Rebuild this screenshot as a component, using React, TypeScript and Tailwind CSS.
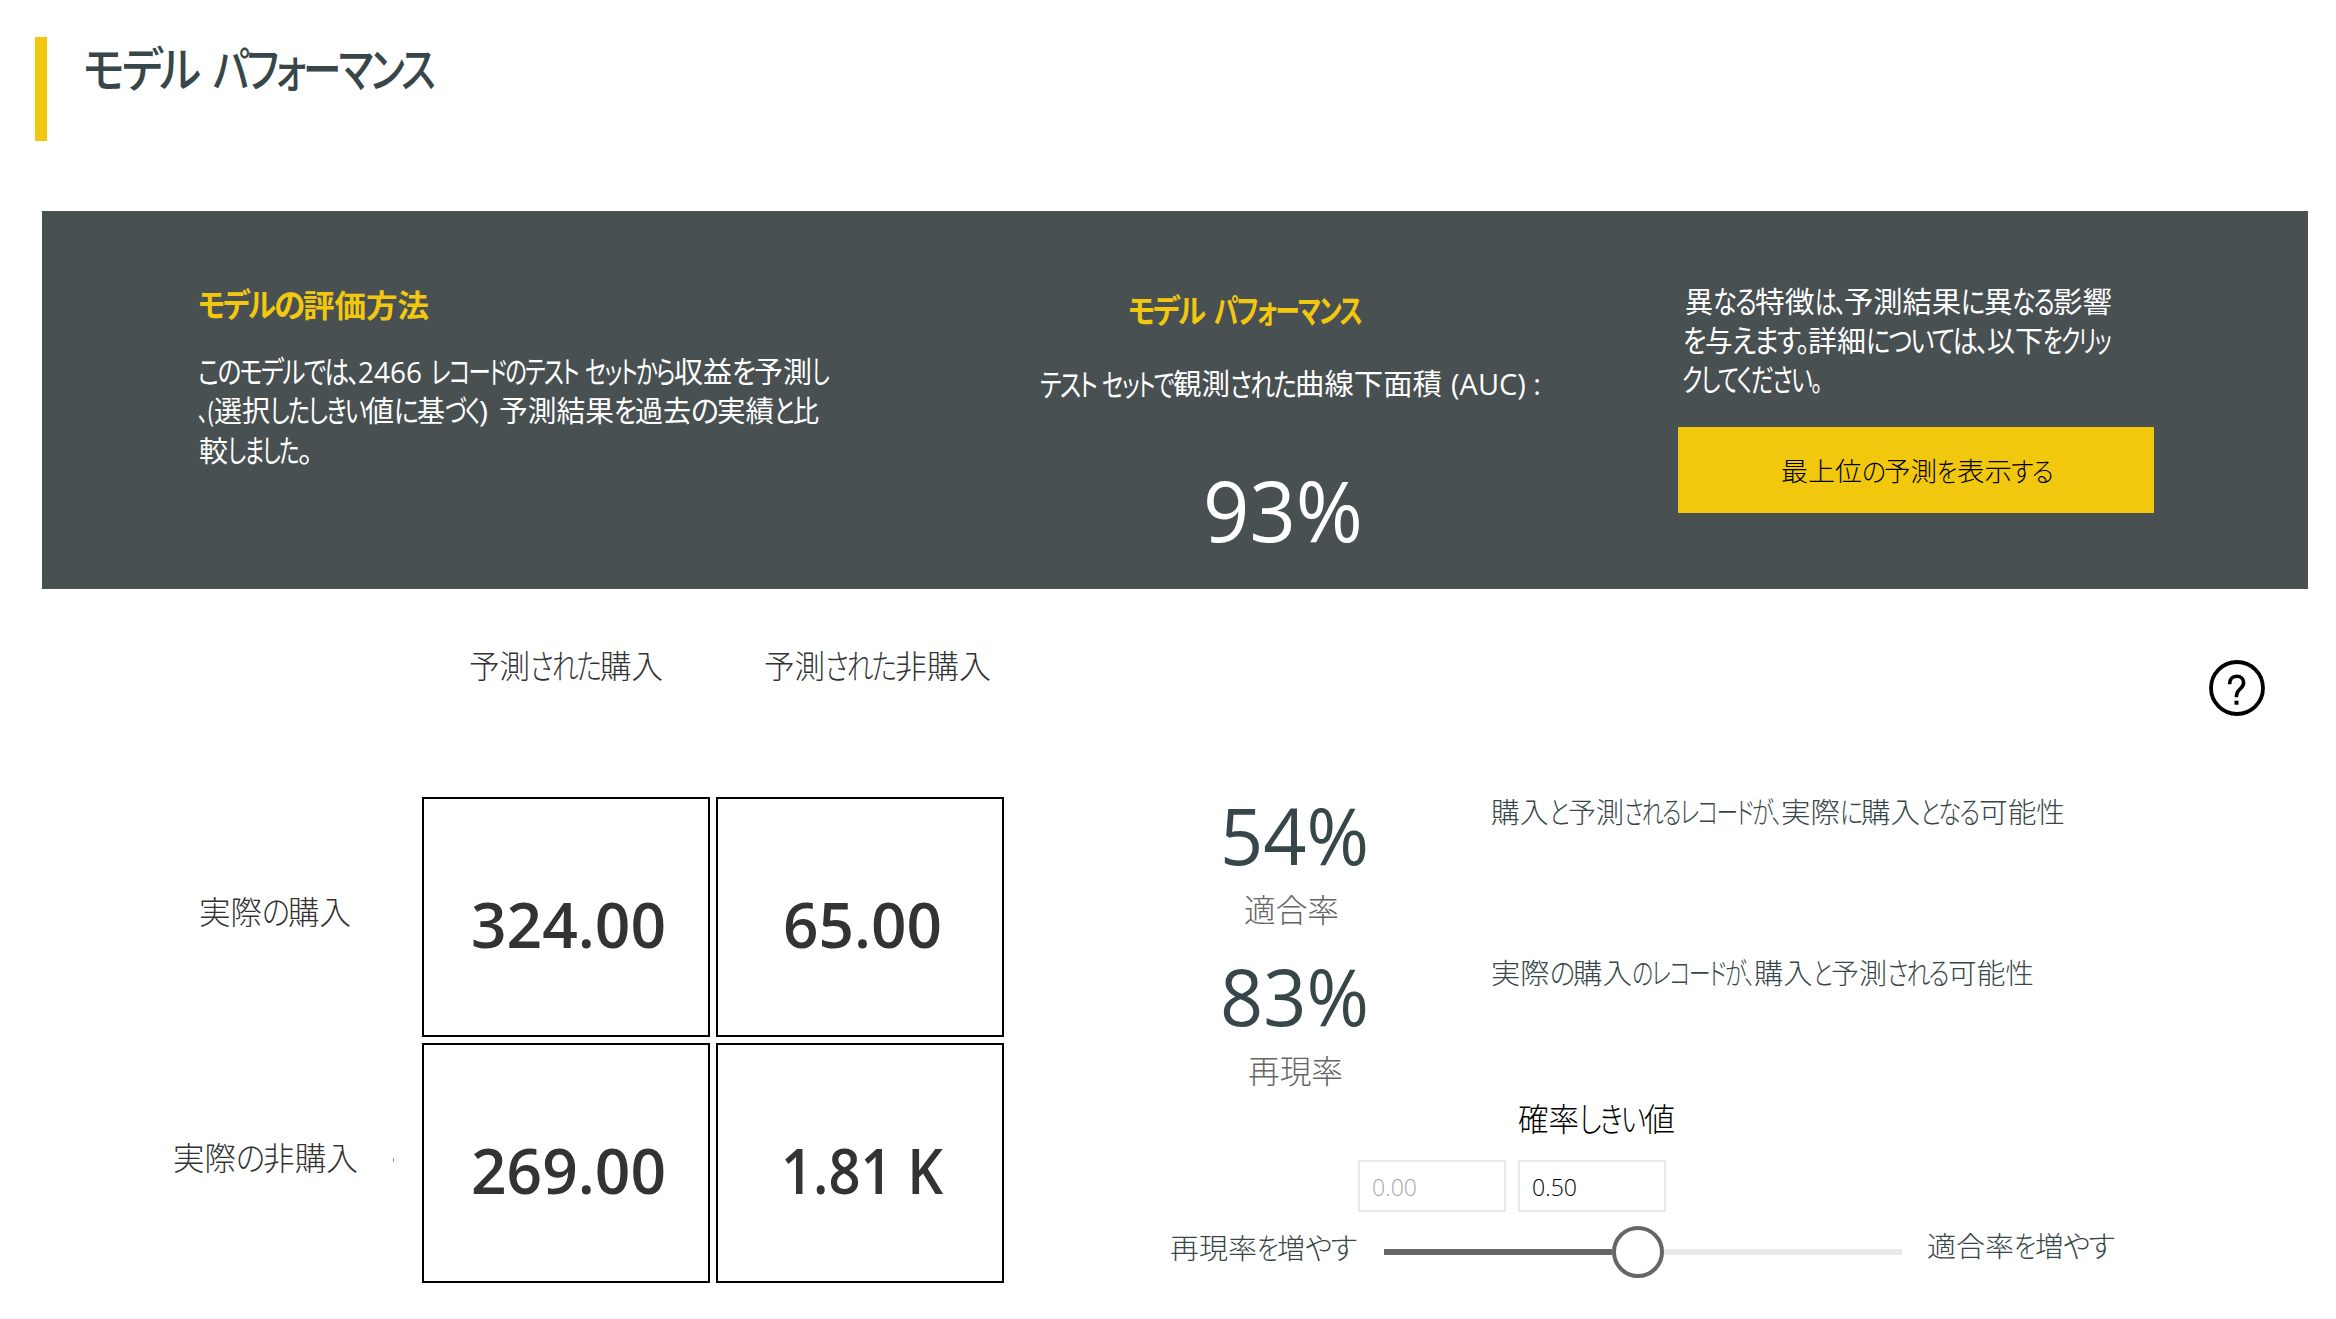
import { useLayoutEffect, useRef, useState } from "react";

type Segment = [text: string, width: number];

const KANA = /^[\u3001-\u30ff]+$/;

/** A run of text condensed or widened to an exact advance width; kana are set tighter than kanji. */
function Run({ text, width }: { text: string; width: number }) {
  const ref = useRef<HTMLSpanElement>(null);
  const [scale, setScale] = useState(1);
  useLayoutEffect(() => {
    if (ref.current && ref.current.offsetWidth > 0) {
      setScale((width / ref.current.getBoundingClientRect().width) * scale);
    }
  }, [text, width]);
  const kana = KANA.test(text) ? "text-[1.05em] tracking-[-0.07em]" : "";
  return (
    <span className="inline-block align-top whitespace-pre" style={{ width }}>
      <span
        ref={ref}
        className={`inline-block origin-left align-top whitespace-pre ${kana}`}
        style={{ transform: `scaleX(${scale})` }}
      >
        {text}
      </span>
    </span>
  );
}

function Line({ parts, className = "" }: { parts: Segment[]; className?: string }) {
  return (
    <div className={`flex whitespace-pre ${className}`}>
      {parts.map(([text, width], i) =>
        text.trim() === "" ? (
          <span key={i} className="whitespace-pre" style={{ width }}>
            {" "}
          </span>
        ) : (
          <Run key={i} text={text} width={width} />
        ),
      )}
    </div>
  );
}

function Cell({ value, width }: { value: string; width: number }) {
  return (
    <div className="flex h-[240px] items-center justify-center border-2 border-black pt-[13px] pl-[4px] text-[63.5px] leading-[80px] font-semibold text-[#333333]">
      <Line parts={[[value, width]]} />
    </div>
  );
}

function Metric({
  value,
  label,
  description,
  labelClass,
}: {
  value: Segment;
  label: Segment;
  description: Segment[];
  labelClass: string;
}) {
  return (
    <div className="flex h-[161px]">
      <div className="w-[271px]">
        <Line className="pt-[2px] text-[79px] leading-[100px] text-[#374649]" parts={[value]} />
        <Line className={`mt-[5px] text-[32px] leading-[40px] font-light text-[#666666] ${labelClass}`} parts={[label]} />
      </div>
      <Line className="pt-[9px] text-[28.5px] leading-[40px] font-light text-[#374649]" parts={description} />
    </div>
  );
}

export default function App() {
  return (
    <main
      lang="ja"
      className="flex h-[1319px] w-[2336px] flex-col overflow-hidden bg-white font-['Open_Sans','Noto_Sans_CJK_JP',sans-serif] [font-feature-settings:'palt']"
    >
      <header className="flex h-[211px] pt-[37px] pl-[35px]">
        <div className="h-[104px] w-3 bg-[#f2c80f]" />
        <h1 className="pl-[36px] text-[46px] leading-[62px] font-medium text-[#374649]">
          <Line
            parts={[
              ["モデル", 115],
              [" ", 15],
              ["パフォーマンス", 220],
            ]}
          />
        </h1>
      </header>

      <section className="ml-[42px] flex h-[378px] w-[2266px] bg-[#485052] pl-[156px] text-[29px] leading-[39px] text-white">
        <div className="w-[842px] pt-[74px]">
          <h2 className="text-[31px] leading-[40px] font-bold text-[#f2c80f]">
            <Line
              parts={[
                ["モデル", 76],
                ["の", 29],
                ["評価方法", 126],
              ]}
            />
          </h2>
          <div className="mt-[27px]">
            <Line
              parts={[
                ["このモデルでは、", 160],
                ["2466", 64],
                [" ", 9],
                ["レコードのテスト", 147],
                [" ", 7],
                ["セットから", 89],
                ["収益", 58],
                ["を", 22],
                ["予測", 58],
                ["し", 16],
              ]}
            />
            <Line
              parts={[
                ["、(", 16],
                ["選択", 56],
                ["したしきい", 95],
                ["値", 29],
                ["に", 23],
                ["基", 28],
                ["づく", 34],
                [")", 9],
                [" ", 11],
                ["予測結果", 115],
                ["を", 21],
                ["過去", 56],
                ["の", 26],
                ["実績", 57],
                ["と", 19],
                ["比", 26],
              ]}
            />
            <Line
              className="pt-px pl-px"
              parts={[
                ["較", 29],
                ["しました", 70],
                ["。", 13],
              ]}
            />
          </div>
        </div>

        <div className="w-[638px] pt-[80px]">
          <h2 className="pl-[88px] text-[31px] leading-[40px] font-bold text-[#f2c80f]">
            <Line
              parts={[
                ["モデル", 76],
                [" ", 10],
                ["パフォーマンス", 147],
              ]}
            />
          </h2>
          <Line
            className="mt-[34px] leading-[38px]"
            parts={[
              ["テスト", 56],
              [" ", 6],
              ["セットで", 71],
              ["観測", 57],
              ["された", 65],
              ["曲線下面積", 147],
              [" ", 9],
              ["(AUC) :", 90],
            ]}
          />
          <Line className="mt-[56px] pl-[163px] text-[85px] leading-[100px]" parts={[["93%", 160]]} />
        </div>

        <div className="w-[476px] pt-[71px]">
          <div className="pl-[7px]">
            <Line
              parts={[
                ["異", 28],
                ["なる", 42],
                ["特徴", 59.5],
                ["は、", 29.5],
                ["予測結果", 117],
                ["に", 22.5],
                ["異", 28.5],
                ["なる", 41],
                ["影響", 59],
              ]}
            />
            <Line
              className="-ml-[2px]"
              parts={[
                ["を", 21.5],
                ["与", 27.5],
                ["えます。", 76],
                ["詳細", 58],
                ["については、", 121],
                ["以下", 56],
                ["をクリッ", 67],
              ]}
            />
            <Line className="-ml-[3px]" parts={[["クしてください。", 139]]} />
          </div>
          <button className="mt-[28px] flex h-[86px] w-[476px] items-center justify-center bg-[#f2c80f] pt-[2px] text-[26.5px] leading-[40px] font-light text-black">
            <Line
              parts={[
                ["最上位", 81],
                ["の", 22.5],
                ["予測", 53],
                ["を", 18.5],
                ["表示", 55],
                ["する", 41],
              ]}
            />
          </button>
        </div>
      </section>

      <section className="flex">
        <div className="w-[1004px] pt-[55px]">
          <div className="flex h-[153px] pl-[469px] text-[32px] leading-[44px] font-light text-[#333333]">
            <Line
              className="w-[295px]"
              parts={[
                ["予測", 61],
                ["された", 70],
                ["購入", 63],
              ]}
            />
            <Line
              parts={[
                ["予測", 61],
                ["された", 70],
                ["非購入", 96],
              ]}
            />
          </div>
          <div className="grid grid-cols-[416px_288px_288px] gap-[6px] text-[32px] leading-[44px]">
            <div className="flex items-center pb-[10px] pl-[199px] font-light text-[#333333]">
              <Line
                parts={[
                  ["実際", 63],
                  ["の", 26],
                  ["購入", 63],
                ]}
              />
            </div>
            <Cell value="324.00" width={195} />
            <Cell value="65.00" width={159} />
            <div className="flex items-center pb-[10px] pl-[173px] font-light text-[#333333]">
              <Line
                parts={[
                  ["実際", 63],
                  ["の", 27],
                  ["非購入", 95],
                ]}
              />
              <span className="mt-[3px] ml-[35px] h-[4px] w-px bg-[#999999]" />
            </div>
            <Cell value="269.00" width={195} />
            <Cell value="1.81 K" width={162} />
          </div>
        </div>

        <div className="flex w-[1332px] flex-col">
          <div className="flex h-[194px] justify-end pt-[71px] pr-[71px]">
            <svg className="h-[56px] w-[56px]" viewBox="0 0 56 56" fill="none" stroke="black" strokeWidth="3.8">
              <circle cx="28" cy="28" r="26" />
              <path d="M20.6 24.2c0-5.2 3-8 7-8 4.200 0 7 2.600 7 6.400 0 3.200-1.500 4.800-3.600 6.600-2.600 2.200-3.600 3.600-3.600 8" strokeWidth="3.600" />
              <path d="M25.500 42.700h4" strokeWidth="4" />
            </svg>
          </div>
          <div className="pl-[216px]">
            <Metric
              value={["54%", 149]}
              label={["適合率", 95]}
              labelClass="pl-[24px]"
              description={[
                ["購入", 57.5],
                ["と", 19],
                ["予測", 56],
                ["されるレコードが、", 157],
                ["実際", 59],
                ["に", 21.5],
                ["購入", 59],
                ["となる", 58.5],
                ["可能性", 86],
              ]}
            />
            <Metric
              value={["83%", 149]}
              label={["再現率", 95]}
              labelClass="pl-[28px]"
              description={[
                ["実際", 58.5],
                ["の", 23.5],
                ["購入", 59],
                ["のレコードが、", 122],
                ["購入", 58.5],
                ["と", 18],
                ["予測", 56],
                ["される", 61],
                ["可能性", 86],
              ]}
            />
          </div>
          <Line
            className="-mt-[6px] pl-[514px] text-[32px] leading-[40px] font-light text-black"
            parts={[
              ["確率", 61],
              ["しきい", 65],
              ["値", 31],
            ]}
          />
          <div className="mt-[21px] flex gap-3 pl-[354px] text-[23px] leading-[48px] font-light">
            <div className="h-[52px] w-[148px] border-2 border-[#e9e9e9] pt-px pl-[12px] text-[#a6a6a6]">
              <Line parts={[["0.00", 45]]} />
            </div>
            <div className="h-[52px] w-[148px] border-2 border-[#e9e9e9] pt-px pl-[12px] text-[#000000]">
              <Line parts={[["0.50", 45]]} />
            </div>
          </div>
          <div className="mt-[14px] flex h-[52px] items-center pl-[166px] text-[28.5px] leading-[40px] font-light text-[#374649]">
            <Line
              className="w-[214px] pb-[9px]"
              parts={[
                ["再現率", 87],
                ["を", 20],
                ["増", 28],
                ["やす", 50],
              ]}
            />
            <div className="flex w-[518px] items-center">
              <div className="h-[6px] w-[228px] bg-[#666666]" />
              <div className="h-[52px] w-[52px] rounded-full border-4 border-[#666666] bg-white" />
              <div className="h-[6px] flex-1 bg-[#e9e9e9]" />
            </div>
            <Line
              className="pb-[13px] pl-[25px]"
              parts={[
                ["適合率", 87],
                ["を", 20.5],
                ["増", 28.5],
                ["やす", 50],
              ]}
            />
          </div>
        </div>
      </section>
    </main>
  );
}
